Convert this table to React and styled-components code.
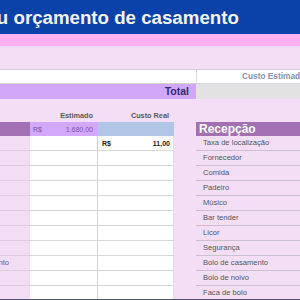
import styled, { createGlobalStyle } from 'styled-components'

const GlobalStyle = createGlobalStyle`
  body {
    margin: 0;
    font-family: "Liberation Sans", Arial, sans-serif;
  }
`;

const ceremony = [
  'Local',
  'Oficiante',
  'Flores',
  'Música',
  'Fotografia',
  'Vídeo',
  'Convites',
  'Decoração',
  'Licença de casamento',
  'Alianças',
  'Transporte',
];

const reception = [
  'Taxa de localização',
  'Fornecedor',
  'Comida',
  'Padeiro',
  'Músico',
  'Bar tender',
  'Licor',
  'Segurança',
  'Bolo de casamento',
  'Bolo de noivo',
  'Faca de bolo',
];

export default function App() {
  return (
    <Frame>
      <GlobalStyle />
      <TitleBar>
        <Title>Seu orçamento de casamento</Title>
      </TitleBar>
      <PinkBand />
      <Spacer $h={23} />
      <SummaryRow>
        <SummaryBlank />
        <SummaryHead>Custo Estimado</SummaryHead>
      </SummaryRow>
      <TotalRow>
        <TotalLabel>Total</TotalLabel>
        <TotalValue />
      </TotalRow>
      <Sheet>
        <BudgetTable>
          <ColHead />
          <ColHead>Estimado</ColHead>
          <ColHead>Custo Real</ColHead>

          <SectionCell>Cerimônia</SectionCell>
          <EstimateCell>
            <span>R$</span>
            <span>1.680,00</span>
          </EstimateCell>
          <RealCell />

          {ceremony.map((item, i) => (
            <Row key={item}>
              <LabelCell>{item}</LabelCell>
              <ValueCell $divider />
              <ValueCell>
                {i === 0 && (
                  <>
                    <span>R$</span>
                    <span>11,00</span>
                  </>
                )}
              </ValueCell>
            </Row>
          ))}
        </BudgetTable>
        <Category>
          <CategoryHead>Recepção</CategoryHead>
          {reception.map((item) => (
            <CategoryItem key={item}>{item}</CategoryItem>
          ))}
        </Category>
      </Sheet>
    </Frame>
  )
}

const Frame = styled.div`
  width: 300px;
  height: 300px;
  box-sizing: border-box;
  overflow: hidden;
  background: #f3def6;
  border-bottom: 1px solid #4b5470;
`;
const TitleBar = styled.div`
  height: 34px;
  background: #0b42a9;
  overflow: hidden;
  white-space: nowrap;
`;
const Title = styled.h1`
  margin: 0 0 0 -26px;
  padding-top: 1px;
  font-size: 18.7px;
  line-height: 33px;
  font-weight: 700;
  color: #f4f4f8;
`;
const PinkBand = styled.div`
  height: 12px;
  background: #ffb0f1;
`;
const Spacer = styled.div`
  height: ${(p) => p.$h}px;
`;
const SummaryRow = styled.div`
  display: grid;
  grid-template-columns: 196px 1fr;
  height: 15px;
  box-sizing: border-box;
  border-top: 1px solid #d6d2da;
  border-bottom: 1px solid #d6d2da;
  background: #ffffff;
`;
const SummaryBlank = styled.div``;
const SummaryHead = styled.div`
  border-left: 1px solid #dcdcdc;
  padding-left: 45px;
  font-size: 8.3px;
  font-weight: 700;
  line-height: 13px;
  color: #8590b4;
  white-space: nowrap;
`;
const TotalRow = styled.div`
  display: grid;
  grid-template-columns: 196px 1fr;
  height: 15px;
`;
const TotalLabel = styled.div`
  background: #d2a7f9;
  text-align: right;
  padding-right: 7px;
  font-size: 10.5px;
  font-weight: 700;
  line-height: 15px;
  color: #2e2c72;
`;
const TotalValue = styled.div`
  background: #e2e2e2;
`;
const Sheet = styled.div`
  display: flex;
  gap: 22px;
  align-items: flex-start;
`;
const BudgetTable = styled.div`
  margin-left: -74px;
  display: grid;
  grid-template-columns: 104px 68px 76px;
  grid-template-rows: 23px 14px;
  grid-auto-rows: 15px;
  flex-shrink: 0;
`;
const Row = styled.div`
  display: contents;
`;
const ColHead = styled.div`
  align-self: end;
  text-align: right;
  padding: 0 5px 2px 0;
  font-size: 7.3px;
  font-weight: 700;
  color: #5a5a5a;
  white-space: nowrap;
`;
const SectionCell = styled.div`
  background: #a470b4;
  padding-left: 3px;
  font-size: 12px;
  font-weight: 700;
  line-height: 14px;
  color: #ffffff;
  white-space: nowrap;
  overflow: hidden;
`;
const EstimateCell = styled.div`
  display: flex;
  justify-content: space-between;
  align-items: center;
  padding: 0 5px 0 3px;
  background: #d3a7fa;
  font-size: 7px;
  color: #7a56a8;
`;
const RealCell = styled.div`
  background: #b1c6e7;
`;
const LabelCell = styled.div`
  box-sizing: border-box;
  border-bottom: 1px solid #ddcbe1;
  background: #f2dcf6;
  padding-left: 7px;
  font-size: 7.6px;
  line-height: 14px;
  color: #666;
  white-space: nowrap;
`;
const ValueCell = styled.div`
  box-sizing: border-box;
  display: flex;
  justify-content: space-between;
  align-items: center;
  padding: 0 3px 0 4px;
  background: #ffffff;
  border-bottom: 1px solid #d8d8d8;
  border-right: 1px solid ${(p) => (p.$divider ? '#d2d2d2' : '#e2dce4')};
  font-size: 7px;
  font-weight: 700;
  color: #222;
`;
const Category = styled.div`
  flex: 1;
  padding-top: 23px;
`;
const CategoryHead = styled.div`
  height: 14px;
  background: #a470b4;
  padding-left: 3px;
  font-size: 12px;
  font-weight: 700;
  line-height: 14px;
  color: #ffffff;
`;
const CategoryItem = styled.div`
  box-sizing: border-box;
  height: 15px;
  border-bottom: 1px solid #cdbfd2;
  padding-left: 7px;
  font-size: 7.6px;
  line-height: 14px;
  color: #555;
  white-space: nowrap;
`;
